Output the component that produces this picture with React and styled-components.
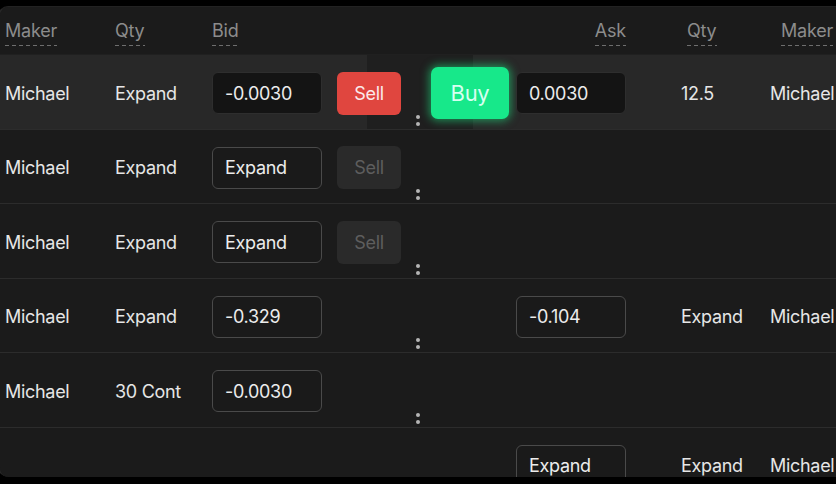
import React from "react";
import styled, { createGlobalStyle } from "styled-components";

const Global = createGlobalStyle`
  html, body { margin: 0; padding: 0; background: #000; overflow: hidden; }
  body { font-family: Inter, "Noto Sans", "Liberation Sans", sans-serif; }
  #root { width: 836px; height: 484px; overflow: hidden; }
`;

const Panel = styled.div`
  margin-top: 6px;
  width: 880px;
  height: 471px;
  background: #1b1b1b;
  border-left: 2px solid #262626;
  border-top: 1px solid #222;
  border-radius: 10px 0 0 10px;
  box-sizing: border-box;
  overflow: hidden;
  margin-left: -2px;
`;

const cols = "115px 97px 125px 94px 85px 165px 89px 1fr";

const Header = styled.div`
  display: grid;
  grid-template-columns: ${cols};
  height: 48px;
  align-items: center;
  background: #1b1b1b;
  border-bottom: 1px solid #202020;
  box-sizing: border-box;
  padding-top: 5px;
`;

const HeadCell = styled.div`
  padding-left: ${(p) => p.$pl || 0}px;
  text-align: ${(p) => (p.$right ? "right" : "left")};
  width: ${(p) => (p.$w ? p.$w + "px" : "auto")};
  white-space: nowrap;
`;

const HeadText = styled.span`
  display: inline-block;
  font-size: 18px;
  letter-spacing: -0.2px;
  color: #8c8c8c;
  line-height: 22px;
  padding-bottom: 4px;
  background-image: linear-gradient(to right, #6e6e6e 0, #6e6e6e 4px, transparent 4px, transparent 7px);
  background-size: 7px 1.5px;
  background-repeat: repeat-x;
  background-position: 0 100%;
`;

const Row = styled.div`
  position: relative;
  display: grid;
  grid-template-columns: ${cols};
  height: 74.5px;
  align-items: center;
  box-sizing: border-box;
  padding-top: 3px;
  border-bottom: 1.5px solid #2c2c2c;
  background: ${(p) =>
    p.$active
      ? "linear-gradient(to right, #282828 0, #282828 367px, #1f1f1f 367px, #1f1f1f 473px, #282828 473px)"
      : "#1b1b1b"};
`;

const Cell = styled.div`
  font-size: 18px;
  letter-spacing: -0.3px;
  color: #e6e6e6;
  padding-left: ${(p) => p.$pl || 0}px;
  white-space: nowrap;
  display: flex;
  align-items: center;
`;

const Input = styled.div`
  width: 110px;
  height: 42px;
  box-sizing: border-box;
  border-radius: 6px;
  border: 1.5px solid ${(p) => (p.$dim ? "#2e2e2e" : "#4a4a4a")};
  background: ${(p) => (p.$dim ? "#141414" : "#1a1a1a")};
  display: flex;
  align-items: center;
  padding-left: 12px;
  font-size: 18px;
  color: #ececec;
`;

const SellBtn = styled.div`
  width: 64px;
  height: 43px;
  border-radius: 6px;
  display: flex;
  align-items: center;
  justify-content: center;
  font-size: 18px;
  background: ${(p) => (p.$disabled ? "#2a2a2a" : "#e0463f")};
  color: ${(p) => (p.$disabled ? "#5e5e5e" : "#fbeaea")};
`;

const BuyBtn = styled.div`
  width: 78px;
  height: 52px;
  border-radius: 7px;
  display: flex;
  align-items: center;
  justify-content: center;
  font-size: 22px;
  background: #17e88a;
  color: #d6fff0;
  box-shadow: 0 0 8px 2px rgba(30, 230, 130, 0.55);
`;

const Handle = styled.div`
  position: absolute;
  left: 416px;
  bottom: 3px;
  display: flex;
  flex-direction: column;
  gap: 3px;
`;

const Dot = styled.span`
  width: 4px;
  height: 4px;
  border-radius: 50%;
  background: #b5b5b5;
`;

const rows = [
  { maker: "Michael", qty: "Expand", bid: "-0.0030", sell: "active", buy: true, ask: "0.0030", aqty: "12.5", amaker: "Michael", active: true, dimBid: true, dimAsk: true },
  { maker: "Michael", qty: "Expand", bid: "Expand", sell: "disabled" },
  { maker: "Michael", qty: "Expand", bid: "Expand", sell: "disabled" },
  { maker: "Michael", qty: "Expand", bid: "-0.329", ask: "-0.104", aqty: "Expand", amaker: "Michael" },
  { maker: "Michael", qty: "30 Cont", bid: "-0.0030" },
  { ask: "Expand", aqty: "Expand", amaker: "Michael" },
];

export default function App() {
  return (
    <>
      <Global />
      <Panel>
        <Header>
          <HeadCell $pl={5}><HeadText>Maker</HeadText></HeadCell>
          <HeadCell><HeadText>Qty</HeadText></HeadCell>
          <HeadCell><HeadText>Bid</HeadText></HeadCell>
          <HeadCell />
          <HeadCell />
          <HeadCell $right $w={110}><HeadText>Ask</HeadText></HeadCell>
          <HeadCell $pl={6}><HeadText>Qty</HeadText></HeadCell>
          <HeadCell $pl={11}><HeadText>Maker</HeadText></HeadCell>
        </Header>
        {rows.map((r, i) => (
          <Row key={i} $active={r.active}>
            <Cell $pl={5}>{r.maker}</Cell>
            <Cell>{r.qty}</Cell>
            <Cell>{r.bid && <Input $dim={r.dimBid}>{r.bid}</Input>}</Cell>
            <Cell>
              {r.sell && <SellBtn $disabled={r.sell === "disabled"}>Sell</SellBtn>}
            </Cell>
            <Cell>{r.buy && <BuyBtn>Buy</BuyBtn>}</Cell>
            <Cell>{r.ask && <Input $dim={r.dimAsk}>{r.ask}</Input>}</Cell>
            <Cell>{r.aqty}</Cell>
            <Cell>{r.amaker}</Cell>
            <Handle>
              <Dot />
              <Dot />
            </Handle>
          </Row>
        ))}
      </Panel>
    </>
  );
}
